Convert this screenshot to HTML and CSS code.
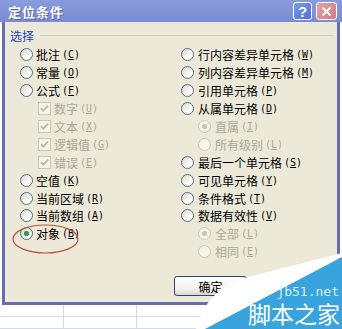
FILE: index.html
```html
<!DOCTYPE html>
<html lang="zh-CN">

<head>
    <meta charset="UTF-8">
    <title>定位条件</title>
    <link rel="stylesheet" href="styles.css">
</head>

<body>
    <div class="titlebar">
        <span class="title">定位条件</span>
        <span class="tbtn help">?</span>
        <span class="tbtn close">
            <svg width="11" height="11" viewBox="0 0 11 11"><path d="M1.5 1.5l8 8M9.5 1.5l-8 8" stroke="#fff" stroke-width="2"/></svg>
        </span>
    </div>

    <div class="frame">
        <div class="legend">
            <span>选择</span>
            <span class="rule"></span>
        </div>

        <div class="cols">
            <div class="col">
                <div class="opt"><span class="radio"></span>批注<span class="key">(<u>C</u>)</span></div>
                <div class="opt"><span class="radio"></span>常量<span class="key">(<u>O</u>)</span></div>
                <div class="opt"><span class="radio"></span>公式<span class="key">(<u>F</u>)</span></div>
                <div class="opt sub-c off"><span class="check"><svg width="11" height="11" viewBox="0 0 11 11"><path d="M2 5.2l2.3 2.4 4.7-5" fill="none" stroke="#bdbbad" stroke-width="2"/></svg></span>数字<span class="key">(<u>U</u>)</span></div>
                <div class="opt sub-c off"><span class="check"><svg width="11" height="11" viewBox="0 0 11 11"><path d="M2 5.2l2.3 2.4 4.7-5" fill="none" stroke="#bdbbad" stroke-width="2"/></svg></span>文本<span class="key">(<u>X</u>)</span></div>
                <div class="opt sub-c off"><span class="check"><svg width="11" height="11" viewBox="0 0 11 11"><path d="M2 5.2l2.3 2.4 4.7-5" fill="none" stroke="#bdbbad" stroke-width="2"/></svg></span>逻辑值<span class="key">(<u>G</u>)</span></div>
                <div class="opt sub-c off"><span class="check"><svg width="11" height="11" viewBox="0 0 11 11"><path d="M2 5.2l2.3 2.4 4.7-5" fill="none" stroke="#bdbbad" stroke-width="2"/></svg></span>错误<span class="key">(<u>E</u>)</span></div>
                <div class="opt"><span class="radio"></span>空值<span class="key">(<u>K</u>)</span></div>
                <div class="opt"><span class="radio"></span>当前区域<span class="key">(<u>R</u>)</span></div>
                <div class="opt"><span class="radio"></span>当前数组<span class="key">(<u>A</u>)</span></div>
                <div class="opt"><span class="radio on"></span>对象<span class="key">(<u>B</u>)</span></div>
            </div>
            <div class="col">
                <div class="opt"><span class="radio"></span>行内容差异单元格<span class="key">(<u>W</u>)</span></div>
                <div class="opt"><span class="radio"></span>列内容差异单元格<span class="key">(<u>M</u>)</span></div>
                <div class="opt"><span class="radio"></span>引用单元格<span class="key">(<u>P</u>)</span></div>
                <div class="opt"><span class="radio"></span>从属单元格<span class="key">(<u>D</u>)</span></div>
                <div class="opt sub-r off"><span class="radio on"></span>直属<span class="key">(<u>I</u>)</span></div>
                <div class="opt sub-r off"><span class="radio"></span>所有级别<span class="key">(<u>L</u>)</span></div>
                <div class="opt"><span class="radio"></span>最后一个单元格<span class="key">(<u>S</u>)</span></div>
                <div class="opt"><span class="radio"></span>可见单元格<span class="key">(<u>Y</u>)</span></div>
                <div class="opt"><span class="radio"></span>条件格式<span class="key">(<u>T</u>)</span></div>
                <div class="opt"><span class="radio"></span>数据有效性<span class="key">(<u>V</u>)</span></div>
                <div class="opt sub-r off"><span class="radio on"></span>全部<span class="key">(<u>L</u>)</span></div>
                <div class="opt sub-r off"><span class="radio"></span>相同<span class="key">(<u>E</u>)</span></div>
            </div>
        </div>

        <div class="actions">
            <button type="button" class="btn">确定</button>
        </div>
    </div>

    <div class="cells">
        <span></span><span></span><span></span><span></span>
        <span></span><span></span><span></span><span></span>
    </div>

    <!-- annotation ellipse and site watermark laid over the screenshot -->
    <svg class="overlay" width="342" height="329" viewBox="0 0 342 329">
        <ellipse cx="45.5" cy="239" rx="32.5" ry="14" fill="none" stroke="#b4533f" stroke-width="1.2"/>
        <path d="M196 329 Q203 306 214 296 Q226 283 248 277 L342 253 L342 257 L205 329 Z" fill="#ffffff"/>
        <polygon points="342,257 205,329 342,329" fill="#39a3dd"/>
    </svg>
    <div class="wm-site">jb51.net</div>
    <div class="wm-name">脚本之家</div>
</body>

</html>
```

FILE: styles.css
```css
* {
    box-sizing: border-box;
}

body {
    margin: 0;
    width: 342px;
    height: 329px;
    overflow: hidden;
    position: relative;
    background: #ffffff;
    font-family: "Noto Sans CJK SC", sans-serif;
    font-size: 12px;
    color: #000000;
}

.titlebar {
    height: 22px;
    display: flex;
    align-items: center;
    padding: 0 5px 0 8px;
    background: linear-gradient(#8a9bdc, #7a8cd2);
}

.title {
    flex: 1;
    color: #ffffff;
    font-weight: bold;
    font-size: 13px;
    letter-spacing: 1px;
    text-shadow: 1px 1px 0 #5a68a8;
}

.tbtn {
    height: 18px;
    border: 1px solid #ffffff;
    border-radius: 3px;
    display: flex;
    align-items: center;
    justify-content: center;
    color: #ffffff;
}

.help {
    width: 19px;
    margin-right: 4px;
    background: linear-gradient(135deg, #7c98ec, #4f70d8);
    font-family: "Liberation Sans", sans-serif;
    font-weight: bold;
    font-size: 15px;
}

.close {
    width: 21px;
    background: linear-gradient(135deg, #e6a2a6, #cf7b84);
}

.frame {
    height: 283px;
    margin: 0 2px;
    background: #ece9d8;
    border: 3px solid #666eb2;
    border-top: none;
    display: flex;
    flex-direction: column;
}

.legend {
    height: 14px;
    margin-top: 6px;
    padding-left: 5px;
    display: flex;
    align-items: center;
    color: #1d46b8;
}

.rule {
    flex: 1;
    margin: 0 4px 0 6px;
    border-top: 1px solid #d0d0bf;
}

.cols {
    margin-top: 4px;
    padding-left: 15px;
    display: grid;
    grid-template-columns: 161px 1fr;
}

.opt {
    height: 17.9px;
    display: flex;
    align-items: center;
    white-space: nowrap;
}

.key {
    margin-left: 2px;
    font-family: "DejaVu Sans Mono", monospace;
    font-size: 10px;
}

.radio {
    flex: none;
    width: 13px;
    height: 13px;
    margin-right: 3px;
    border-radius: 50%;
    border: 1px solid #526d89;
    background: linear-gradient(135deg, #d9d6ca, #ffffff 75%);
}

.radio.on {
    background: radial-gradient(circle, #3f9b41 2.4px, transparent 3px), linear-gradient(135deg, #d9d6ca, #ffffff 75%);
}

.col + .col .radio {
    margin-right: 4px;
}

.sub-c {
    padding-left: 18px;
}

.sub-r {
    padding-left: 17px;
}

.check {
    flex: none;
    width: 13px;
    height: 13px;
    margin-right: 3px;
    border: 1px solid #cac8bb;
    background: #f5f4ea;
    display: flex;
    align-items: center;
    justify-content: center;
}

.off {
    color: #aca899;
}

.off .radio {
    border-color: #cac8bb;
    background: #f5f4ea;
}

.off .radio.on {
    background: radial-gradient(circle, #c8c6b8 2.4px, #f5f4ea 3px);
}

.actions {
    margin-top: auto;
    margin-bottom: 6px;
    padding-left: 169px;
    display: flex;
}

.btn {
    width: 73px;
    height: 20px;
    padding: 0;
    border: 1px solid #23497a;
    border-radius: 3px;
    background: linear-gradient(#ffffff, #f2f1ea 70%, #d9d6c8);
    font-family: "Noto Sans CJK SC", sans-serif;
    font-size: 12px;
    color: #000000;
}

.cells {
    height: 24px;
    display: grid;
    grid-template-columns: 64px 73px 72px 1fr;
    grid-template-rows: 12px 1fr;
}

.cells span {
    border-right: 1px solid #d6dae4;
    border-bottom: 1px solid #d6dae4;
}

.overlay {
    position: absolute;
    left: 0;
    top: 0;
}

.wm-site {
    position: absolute;
    right: 3px;
    top: 285px;
    font-family: "DejaVu Sans Mono", monospace;
    font-size: 13px;
    line-height: 13px;
    color: #d9eefa;
}

.wm-name {
    position: absolute;
    right: 2px;
    top: 301px;
    font-size: 23px;
    line-height: 24px;
    color: #ffffff;
}
```
